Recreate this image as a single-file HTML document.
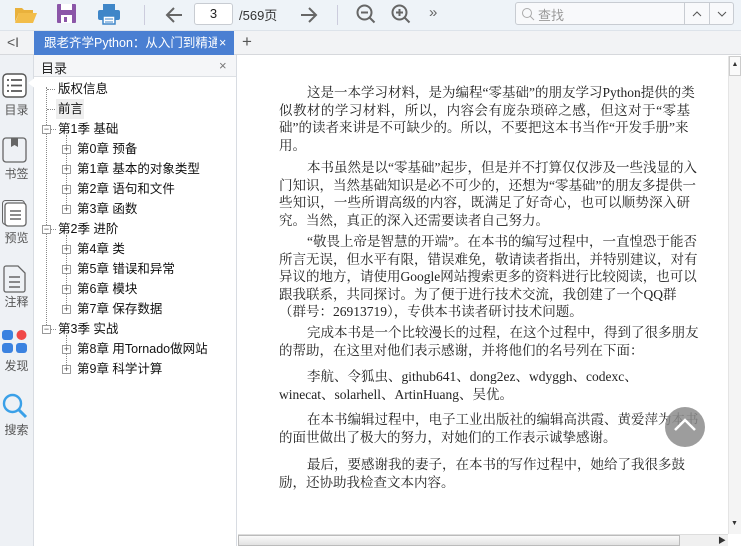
<!DOCTYPE html>
<html><head><meta charset="utf-8">
<style>
*{margin:0;padding:0;box-sizing:border-box}
body{width:741px;height:546px;overflow:hidden;position:relative;background:#fff;font-family:"Liberation Sans","Noto Sans CJK SC",sans-serif;color:#222}
.abs{position:absolute}
#tb{left:0;top:0;width:741px;height:31px;background:#eef3f8;border-bottom:1px solid #dde3ea}
#tabs{left:0;top:31px;width:741px;height:24px;background:#f2f3f5;border-bottom:1px solid #d6d8dc}
#side{left:0;top:55px;width:34px;height:491px;background:#eef1f5;border-right:1px solid #d8dce2}
#toc{left:34px;top:55px;width:203px;height:491px;background:#fff;border-right:1px solid #d8dce2}
.lbl{position:absolute;left:0;width:33px;text-align:center;font-size:12px;color:#555}
.ti{position:absolute;font-size:12.5px;color:#111;white-space:nowrap;line-height:16px}
.bx{position:absolute;width:9px;height:9px;border:1px solid #999;background:#fff;font-size:9px;line-height:7px;text-align:center;color:#444}
.dh{position:absolute;border-top:1px dotted #888;width:8px}
.dv{position:absolute;border-left:1px dotted #888}
.ln{position:absolute;left:279px;width:411px;font-family:"Liberation Serif","Noto Serif CJK SC",serif;font-size:13.5px;line-height:17px;white-space:nowrap;text-align:justify;text-align-last:justify;color:#222}
.ln.l{text-align-last:left}
.ln.i{left:307px;width:383px}
</style></head><body>
<div id="tb" class="abs">
 <svg class="abs" style="left:14px;top:5px" width="24" height="20"><path d="M1 3h7l2 2h9v3H5L1 17z" fill="#e9b13c"/><path d="M5 8h18l-4 10H1z" fill="#f2bd4a"/></svg>
 <svg class="abs" style="left:57px;top:4px" width="19" height="20"><rect x="0" y="0" width="19" height="19" rx="1" fill="#8b56a8"/><rect x="4" y="0" width="11" height="6" fill="#fff"/><rect x="4" y="11" width="11" height="8" fill="#fff"/><rect x="7" y="13" width="3" height="5" fill="#8b56a8"/></svg>
 <svg class="abs" style="left:98px;top:4px" width="22" height="21"><rect x="5" y="0" width="12" height="6" fill="#3f86c8"/><rect x="0" y="6" width="22" height="10" rx="2" fill="#3f86c8"/><rect x="5" y="12" width="12" height="8" fill="#fff" stroke="#3f86c8" stroke-width="1.5"/><path d="M7 15h8M7 18h8" stroke="#3f86c8"/></svg>
 <div class="abs" style="left:144px;top:5px;width:1px;height:20px;background:#ccd"></div>
 <svg class="abs" style="left:164px;top:5px" width="20" height="20"><path d="M18 10H3M10 3l-7 7 7 7" stroke="#666" stroke-width="2" fill="none"/></svg>
 <div class="abs" style="left:194px;top:3px;width:39px;height:22px;background:#fff;border:1px solid #c8ccd2;border-radius:3px;font-size:13px;text-align:center;line-height:20px">3</div>
 <div class="abs" style="left:239px;top:5px;font-size:13px;color:#333">/569页</div>
 <svg class="abs" style="left:299px;top:5px" width="20" height="20"><path d="M2 10h15M10 3l7 7-7 7" stroke="#666" stroke-width="2" fill="none"/></svg>
 <div class="abs" style="left:337px;top:5px;width:1px;height:20px;background:#ccd"></div>
 <svg class="abs" style="left:356px;top:4px" width="21" height="21"><circle cx="8.5" cy="8.5" r="7" stroke="#666" stroke-width="2" fill="none"/><path d="M13.5 13.5l5 5M5 8.5h7" stroke="#666" stroke-width="2"/></svg>
 <svg class="abs" style="left:391px;top:4px" width="21" height="21"><circle cx="8.5" cy="8.5" r="7" stroke="#666" stroke-width="2" fill="none"/><path d="M13.5 13.5l5 5M5 8.5h7M8.5 5v7" stroke="#666" stroke-width="2"/></svg>
 <div class="abs" style="left:429px;top:4px;font-size:15px;color:#666">»</div>
 <div class="abs" style="left:515px;top:2px;width:219px;height:23px;border:1px solid #c8ccd2;border-radius:3px;background:#f8f9fb"></div>
 <svg class="abs" style="left:521px;top:7px" width="14" height="14"><circle cx="6" cy="6" r="4.5" stroke="#aaa" fill="none"/><path d="M9 9l4 4" stroke="#aaa"/></svg>
 <div class="abs" style="left:538px;top:5px;font-size:13px;color:#999">查找</div>
 <div class="abs" style="left:684px;top:2px;width:1px;height:23px;background:#c8ccd2"></div>
 <div class="abs" style="left:709px;top:2px;width:1px;height:23px;background:#c8ccd2"></div>
 <svg class="abs" style="left:692px;top:10px" width="10" height="8"><path d="M1 6l4-4 4 4" stroke="#555" fill="none"/></svg>
 <svg class="abs" style="left:717px;top:10px" width="10" height="8"><path d="M1 2l4 4 4-4" stroke="#555" fill="none"/></svg>
</div>
<div id="tabs" class="abs">
 <div class="abs" style="left:7px;top:3px;font-size:14px;color:#555">&lt;I</div>
 <div class="abs" style="left:34px;top:0;width:200px;height:24px;background:#4a7fd2;color:#fff;font-size:12.5px;line-height:24px;padding-left:10px;white-space:nowrap;overflow:hidden">跟老齐学Python：从入门到精通 <span style="position:absolute;left:183px;background:#4a7fd2;padding:0 2px">×</span></div>
 <div class="abs" style="left:242px;top:1px;font-size:17px;color:#555">+</div>
</div>
<div id="side" class="abs">
 <svg class="abs" style="left:2px;top:18px" width="25" height="25"><rect x="1" y="1" width="23" height="23" rx="4" stroke="#555" stroke-width="1.4" fill="#fff"/><path d="M5 7h2M9 7h11M5 12.5h2M9 12.5h11M5 18h2M9 18h11" stroke="#555" stroke-width="1.8"/></svg>
 <div class="abs" style="left:28px;top:22px;width:8px;height:12px;background:#fff;clip-path:polygon(100% 0,0 50%,100% 100%)"></div>
 <div class="lbl" style="top:46px">目录</div>
 <svg class="abs" style="left:2px;top:82px" width="25" height="26"><rect x="1" y="1" width="23" height="24" rx="3" stroke="#666" stroke-width="1.3" fill="none"/><path d="M9 1v9l3.5-2 3.5 2V1" fill="#666"/></svg>
 <div class="lbl" style="top:110px">书签</div>
 <svg class="abs" style="left:2px;top:145px" width="25" height="27"><rect x="0.5" y="0.5" width="22" height="24" rx="3" stroke="#666" fill="none"/><rect x="3" y="3" width="21" height="23" rx="3" stroke="#666" stroke-width="1.3" fill="#fff"/><path d="M8 11h11M8 15h11M8 19h11" stroke="#666" stroke-width="1.5"/></svg>
 <div class="lbl" style="top:174px">预览</div>
 <svg class="abs" style="left:3px;top:210px" width="24" height="28"><path d="M1 3a2 2 0 012-2h12l7 7v17a2 2 0 01-2 2H3a2 2 0 01-2-2z" stroke="#666" stroke-width="1.3" fill="none"/><path d="M6 12h11M6 17h11M6 22h11" stroke="#666" stroke-width="1.5"/></svg>
 <div class="lbl" style="top:238px">注释</div>
 <svg class="abs" style="left:2px;top:275px" width="26" height="24"><rect x="0" y="0" width="11" height="10" rx="3" fill="#3b82e0"/><circle cx="19.5" cy="5" r="5" fill="#f04848"/><rect x="0" y="13" width="11" height="10" rx="3" fill="#3b82e0"/><rect x="14" y="13" width="11" height="10" rx="3" fill="#3b82e0"/></svg>
 <div class="lbl" style="top:302px">发现</div>
 <svg class="abs" style="left:2px;top:338px" width="26" height="26"><circle cx="10.5" cy="10.5" r="8.5" stroke="#3aa0e8" stroke-width="2.4" fill="none"/><path d="M17 17l7 7" stroke="#3aa0e8" stroke-width="3"/></svg>
 <div class="lbl" style="top:366px">搜索</div>
</div>
<div id="toc" class="abs">
 <div class="abs" style="left:0;top:0;width:202px;height:22px;background:#f5f6f8;border-bottom:1px solid #dde0e4"></div>
 <div class="abs" style="left:7px;top:3px;font-size:13px">目录</div>
 <div class="abs" style="left:185px;top:3px;font-size:13px;color:#777">×</div>
</div>
<!-- tree -->
<div class="dv" style="left:46px;top:87px;height:242px"></div>
<div class="dh" style="left:47px;top:89px"></div><div class="ti" style="left:58px;top:81px">版权信息</div>
<div class="abs" style="left:56px;top:99px;width:28px;height:20px;background:#eee"></div>
<div class="dh" style="left:47px;top:109px"></div><div class="ti" style="left:58px;top:101px">前言</div>
<div class="bx" style="left:42px;top:125px">−</div><div class="dh" style="left:51px;top:129px;width:5px"></div><div class="ti" style="left:58px;top:121px">第1季 基础</div>
<div class="dv" style="left:66px;top:135px;height:78px"></div>
<div class="bx" style="left:62px;top:145px">+</div><div class="ti" style="left:77px;top:141px">第0章 预备</div>
<div class="bx" style="left:62px;top:165px">+</div><div class="ti" style="left:77px;top:161px">第1章 基本的对象类型</div>
<div class="bx" style="left:62px;top:185px">+</div><div class="ti" style="left:77px;top:181px">第2章 语句和文件</div>
<div class="bx" style="left:62px;top:205px">+</div><div class="ti" style="left:77px;top:201px">第3章 函数</div>
<div class="bx" style="left:42px;top:225px">−</div><div class="dh" style="left:51px;top:229px;width:5px"></div><div class="ti" style="left:58px;top:221px">第2季 进阶</div>
<div class="dv" style="left:66px;top:235px;height:78px"></div>
<div class="bx" style="left:62px;top:245px">+</div><div class="ti" style="left:77px;top:241px">第4章 类</div>
<div class="bx" style="left:62px;top:265px">+</div><div class="ti" style="left:77px;top:261px">第5章 错误和异常</div>
<div class="bx" style="left:62px;top:285px">+</div><div class="ti" style="left:77px;top:281px">第6章 模块</div>
<div class="bx" style="left:62px;top:305px">+</div><div class="ti" style="left:77px;top:301px">第7章 保存数据</div>
<div class="bx" style="left:42px;top:325px">−</div><div class="dh" style="left:51px;top:329px;width:5px"></div><div class="ti" style="left:58px;top:321px">第3季 实战</div>
<div class="dv" style="left:66px;top:335px;height:38px"></div>
<div class="bx" style="left:62px;top:345px">+</div><div class="ti" style="left:77px;top:341px">第8章 用Tornado做网站</div>
<div class="bx" style="left:62px;top:365px">+</div><div class="ti" style="left:77px;top:361px">第9章 科学计算</div>
<!-- content -->
<div class="ln i" style="top:84px">这是一本学习材料，是为编程“零基础”的朋友学习Python提供的类</div>
<div class="ln" style="top:101.5px">似教材的学习材料，所以，内容会有庞杂琐碎之感，但这对于“零基</div>
<div class="ln l" style="top:119px">础”的读者来讲是不可缺少的。所以，不要把这本书当作“开发手册”来</div>
<div class="ln l" style="top:136.5px">用。</div>
<div class="ln i" style="top:159px">本书虽然是以“零基础”起步，但是并不打算仅仅涉及一些浅显的入</div>
<div class="ln" style="top:176.5px">门知识，当然基础知识是必不可少的，还想为“零基础”的朋友多提供一</div>
<div class="ln" style="top:194px">些知识，一些所谓高级的内容，既满足了好奇心，也可以顺势深入研</div>
<div class="ln l" style="top:211.5px">究。当然，真正的深入还需要读者自己努力。</div>
<div class="ln i" style="top:233px">“敬畏上帝是智慧的开端”。在本书的编写过程中，一直惶恐于能否</div>
<div class="ln" style="top:250.5px">所言无误，但水平有限，错误难免，敬请读者指出，并特别建议，对有</div>
<div class="ln" style="top:268px">异议的地方，请使用Google网站搜索更多的资料进行比较阅读，也可以</div>
<div class="ln l" style="top:285.5px">跟我联系，共同探讨。为了便于进行技术交流，我创建了一个QQ群</div>
<div class="ln l" style="top:303px">（群号：26913719），专供本书读者研讨技术问题。</div>
<div class="ln i" style="top:324px">完成本书是一个比较漫长的过程，在这个过程中，得到了很多朋友</div>
<div class="ln l" style="top:341.5px">的帮助，在这里对他们表示感谢，并将他们的名号列在下面：</div>
<div class="ln i l" style="top:368px">李航、令狐虫、github641、dong2ez、wdyggh、codexc、</div>
<div class="ln l" style="top:385.5px">winecat、solarhell、ArtinHuang、吴优。</div>
<div class="ln i l" style="top:411px">在本书编辑过程中，电子工业出版社的编辑高洪霞、黄爱萍为本书</div>
<div class="ln l" style="top:428.5px">的面世做出了极大的努力，对她们的工作表示诚挚感谢。</div>
<div class="ln i l" style="top:456px">最后，要感谢我的妻子，在本书的写作过程中，她给了我很多鼓</div>
<div class="ln l" style="top:473.5px">励，还协助我检查文本内容。</div>
<div class="abs" style="left:665px;top:407px;width:40px;height:40px;border-radius:50%;background:rgba(140,140,140,.85)"></div>
<svg class="abs" style="left:673px;top:417px" width="24" height="16"><path d="M2 13l10-10 10 10" stroke="#fff" stroke-width="2.5" fill="none"/></svg>
<!-- scrollbars -->
<div class="abs" style="left:728px;top:56px;width:13px;height:478px;background:#f4f4f4;border-left:1px solid #e4e4e4"></div>
<div class="abs" style="left:729px;top:56px;width:12px;height:20px;background:#fafafa;border:1px solid #ccc;font-size:7px;text-align:center;line-height:16px;color:#333">▲</div>
<div class="abs" style="left:731px;top:520px;font-size:7px;color:#333">▼</div>
<div class="abs" style="left:238px;top:534px;width:490px;height:12px;background:#f0f0f0;border-top:1px solid #ddd"></div>
<div class="abs" style="left:238px;top:535px;width:442px;height:11px;background:linear-gradient(#fafafa,#e2e2e2);border:1px solid #bbb"></div>
<div class="abs" style="left:718px;top:535px;font-size:8px;color:#333">▶</div>
</body></html>
